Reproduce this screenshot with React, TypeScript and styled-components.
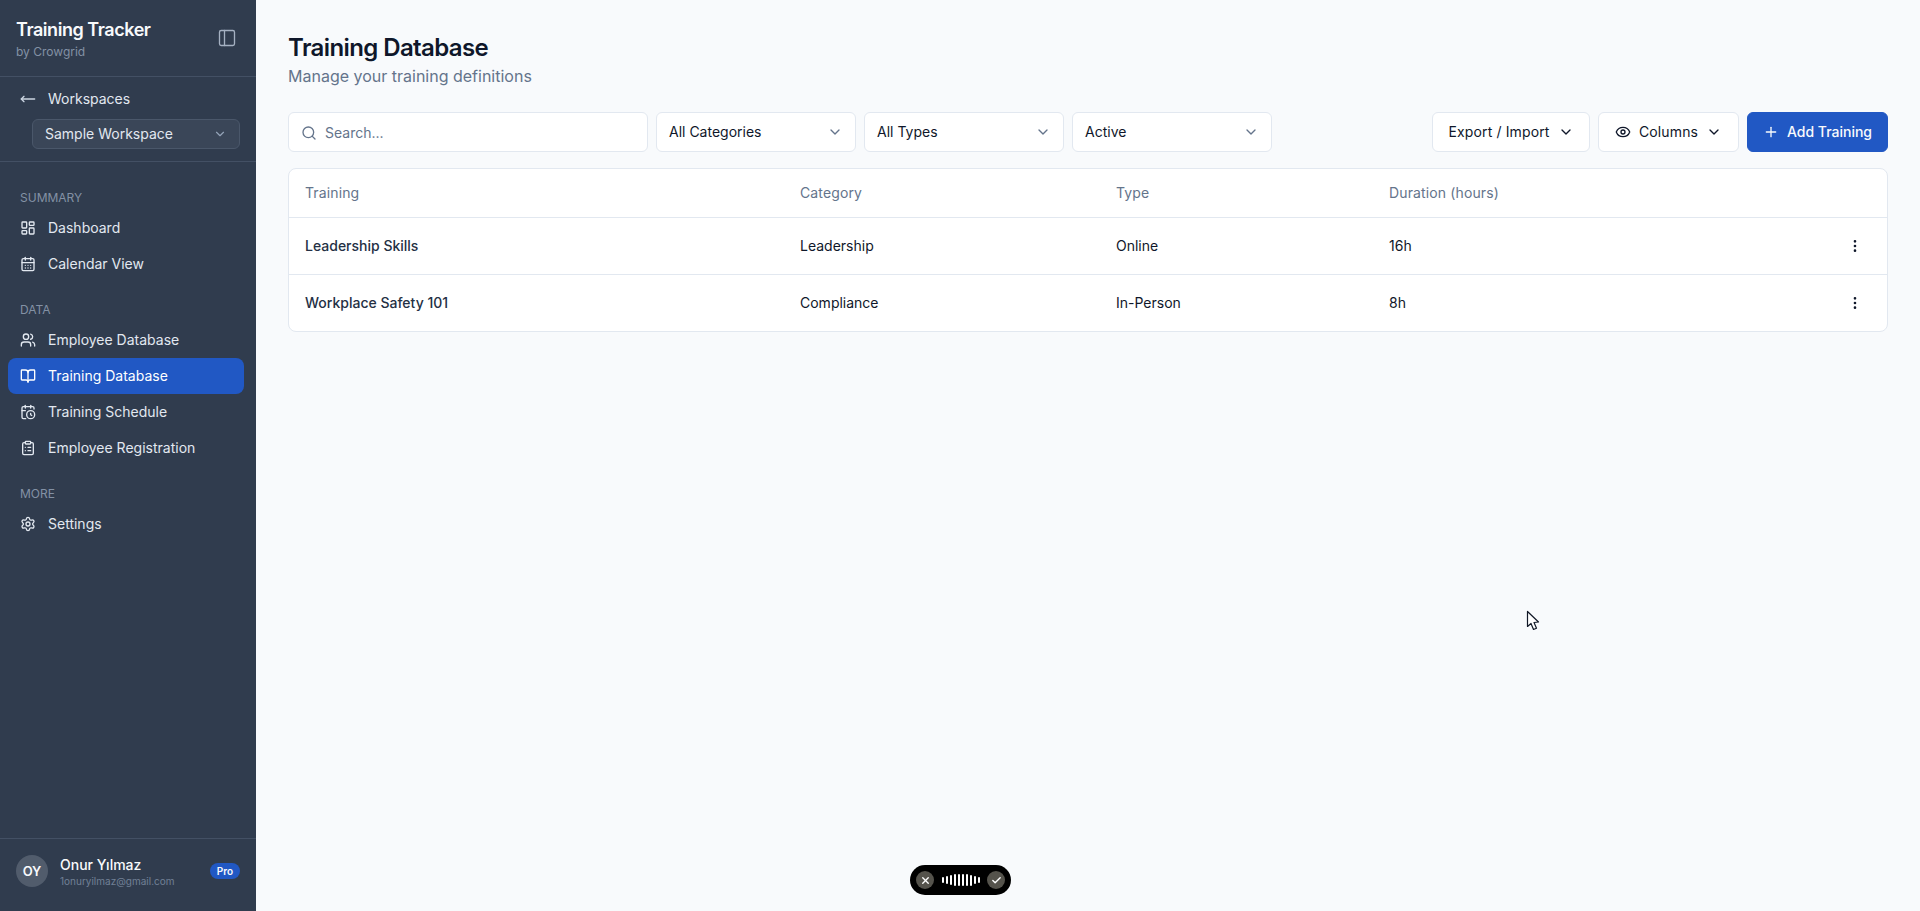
import * as React from 'react';
import styled, { createGlobalStyle } from 'styled-components';
import {
  BookOpen,
  CalendarClock,
  CalendarDays,
  Check,
  ChevronDown,
  ClipboardList,
  EllipsisVertical,
  Eye,
  LayoutDashboard,
  MoveLeft,
  PanelLeft,
  Plus,
  Search,
  Settings,
  Users,
  X,
} from 'lucide-react';

const GlobalStyle = createGlobalStyle`
  * { box-sizing: border-box; }
  html, body { margin: 0; height: 100%; }
  body {
    font-family: Inter, "Liberation Sans", sans-serif;
    background: #f8fafc;
    color: #0f172a;
  }
`;

const Shell = styled.div`
  display: flex;
  height: 911px;
  overflow: hidden;
`;

const Sidebar = styled.aside`
  width: 256px;
  flex: none;
  display: flex;
  flex-direction: column;
  background: #303c4e;
  color: #e2e8f0;
`;

const BrandRow = styled.div`
  height: 77px;
  display: flex;
  align-items: center;
  justify-content: space-between;
  padding: 0 19px 0 16px;
  border-bottom: 1px solid #435064;
`;

const BrandName = styled.div`
  font-size: 18px;
  line-height: 28px;
  font-weight: 600;
  letter-spacing: -0.45px;
  color: #f8fafc;
`;

const BrandSub = styled.div`
  font-size: 12px;
  line-height: 16px;
  color: #8391a5;
`;

const IconButton = styled.button`
  display: flex;
  padding: 0;
  border: 0;
  background: none;
  color: #a5b1c2;
`;

const WorkspaceBlock = styled.div`
  height: 85px;
  padding: 10px 16px 0 20px;
  border-bottom: 1px solid #435064;
`;

const BackLink = styled.div`
  height: 24px;
  display: flex;
  align-items: center;
  gap: 12px;
  padding-bottom: 1px;
  font-size: 14px;
  color: #e2e8f0;
  svg { color: #cbd5e1; }
`;

const WorkspaceSelect = styled.div`
  height: 30px;
  margin: 8px 0 0 12px;
  padding: 0 12px 1px;
  display: flex;
  align-items: center;
  justify-content: space-between;
  border: 1px solid #4a576a;
  border-radius: 6px;
  background: #3a4658;
  font-size: 14px;
  color: #e2e8f0;
  svg { color: #94a3b8; }
`;

const Nav = styled.nav`
  flex: 1;
  padding: 28px 12px 0 8px;
`;

const SectionLabel = styled.div<{ $first?: boolean }>`
  height: 16px;
  margin: ${(p) => (p.$first ? '0' : '20px')} 0 0 12px;
  font-size: 12px;
  line-height: 16px;
  color: #8391a5;
`;

const NavList = styled.div`
  margin-top: 4px;
  display: flex;
  flex-direction: column;
`;

const NavItem = styled.a<{ $active?: boolean }>`
  height: 36px;
  display: flex;
  align-items: center;
  gap: 12px;
  padding: 0 12px 1px;
  border-radius: 8px;
  font-size: 14px;
  background: ${(p) => (p.$active ? '#2158c4' : 'transparent')};
  color: ${(p) => (p.$active ? '#ffffff' : '#e2e8f0')};
`;

const Footer = styled.div`
  height: 73px;
  display: flex;
  align-items: center;
  gap: 12px;
  padding: 0 16px 8px;
  border-top: 1px solid #435064;
`;

const Avatar = styled.div`
  width: 32px;
  height: 32px;
  flex: none;
  display: flex;
  align-items: center;
  justify-content: center;
  border-radius: 50%;
  background: #515c6c;
  color: #f8fafc;
  font-size: 13px;
  font-weight: 600;
`;

const UserInfo = styled.div`
  flex: 1;
  min-width: 0;
  margin-top: 2px;
`;

const UserName = styled.div`
  font-size: 14px;
  line-height: 18px;
  font-weight: 500;
  color: #f8fafc;
`;

const UserMail = styled.div`
  font-size: 10px;
  line-height: 15px;
  color: #718096;
`;

const ProBadge = styled.span`
  padding: 0 7px;
  height: 16px;
  display: flex;
  align-items: center;
  border-radius: 8px;
  background: #2158c4;
  color: #f8fafc;
  font-size: 10px;
  font-weight: 600;
`;

const Main = styled.main`
  flex: 1;
  min-width: 0;
  padding: 32px;
`;

const Title = styled.h1`
  margin: 0;
  font-size: 24px;
  line-height: 32px;
  font-weight: 600;
  letter-spacing: -0.6px;
  color: #0f172a;
`;

const Subtitle = styled.p`
  margin: 0;
  font-size: 16px;
  line-height: 24px;
  color: #64748b;
`;

const Toolbar = styled.div`
  margin-top: 24px;
  display: flex;
  align-items: center;
  gap: 8px;
`;

const SearchBox = styled.div`
  width: 360px;
  height: 40px;
  display: flex;
  align-items: center;
  gap: 8px;
  padding: 1px 12px 0;
  background: #fff;
  border: 1px solid #e2e8f0;
  border-radius: 6px;
  font-size: 14px;
  color: #64748b;
  svg { color: #64748b; }
`;

const Dropdown = styled.div`
  width: 200px;
  height: 40px;
  display: flex;
  align-items: center;
  justify-content: space-between;
  padding: 0 12px 1px;
  background: #fff;
  border: 1px solid #e2e8f0;
  border-radius: 6px;
  font-size: 14px;
  color: #0f172a;
  svg { color: #64748b; }
`;

const Spacer = styled.div`
  flex: 1;
`;

const Button = styled.button<{ $primary?: boolean; $width: number }>`
  width: ${(p) => p.$width}px;
  height: 40px;
  display: flex;
  align-items: center;
  justify-content: center;
  gap: 8px;
  padding: 0 0 1px;
  border-radius: 6px;
  border: 1px solid ${(p) => (p.$primary ? '#2158c4' : '#e2e8f0')};
  background: ${(p) => (p.$primary ? '#2158c4' : '#fff')};
  color: ${(p) => (p.$primary ? '#f8fafc' : '#0f172a')};
  font: ${(p) => (p.$primary ? 500 : 400)} 14px Inter, "Liberation Sans", sans-serif;
  letter-spacing: ${(p) => (p.$primary ? '0' : '0.13px')};
`;

const Table = styled.div`
  margin-top: 16px;
  background: #fff;
  border: 1px solid #e2e8f0;
  border-radius: 8px;
`;

const Row = styled.div<{ $head?: boolean }>`
  height: ${(p) => (p.$head ? '48px' : '57px')};
  display: grid;
  grid-template-columns: 495px 316px 273px 1fr 64px;
  align-items: center;
  font-size: 14px;
  color: ${(p) => (p.$head ? '#64748b' : '#0f172a')};
  letter-spacing: ${(p) => (p.$head ? '0.13px' : '0')};
  & + & { border-top: 1px solid #e2e8f0; }
`;

const Cell = styled.div<{ $strong?: boolean }>`
  padding: 0 16px 1px;
  font-weight: ${(p) => (p.$strong ? 500 : 400)};
  color: ${(p) => (p.$strong ? '#243044' : 'inherit')};
`;

const RowAction = styled.div`
  display: flex;
  padding-left: 24px;
`;

const Recorder = styled.div`
  position: fixed;
  left: 910px;
  top: 865px;
  width: 101px;
  height: 30px;
  display: flex;
  align-items: center;
  justify-content: space-between;
  padding: 0 6px;
  border-radius: 15px;
  background: #000;
`;

const RecorderButton = styled.div`
  width: 18px;
  height: 18px;
  display: flex;
  align-items: center;
  justify-content: center;
  border-radius: 50%;
  background: #55534c;
  color: #fff;
`;

const Wave = styled.div`
  display: flex;
  align-items: center;
  gap: 2px;
`;

const WaveBar = styled.span<{ $h: number }>`
  width: 2px;
  height: ${(p) => p.$h}px;
  border-radius: 1px;
  background: #fff;
`;

const Cursor = styled.svg`
  position: fixed;
  left: 1526px;
  top: 610px;
`;

const waveHeights = [6, 8, 10, 12, 12, 12, 12, 11, 8, 6];

const sections = [
  {
    label: 'SUMMARY',
    items: [
      { name: 'Dashboard', icon: LayoutDashboard },
      { name: 'Calendar View', icon: CalendarDays },
    ],
  },
  {
    label: 'DATA',
    items: [
      { name: 'Employee Database', icon: Users },
      { name: 'Training Database', icon: BookOpen, active: true },
      { name: 'Training Schedule', icon: CalendarClock },
      { name: 'Employee Registration', icon: ClipboardList },
    ],
  },
  {
    label: 'MORE',
    items: [{ name: 'Settings', icon: Settings }],
  },
];

const trainings = [
  { name: 'Leadership Skills', category: 'Leadership', type: 'Online', hours: '16h' },
  { name: 'Workplace Safety 101', category: 'Compliance', type: 'In-Person', hours: '8h' },
];

export default function App() {
  return (
    <Shell>
      <GlobalStyle />
      <Sidebar>
        <BrandRow>
          <div>
            <BrandName>Training Tracker</BrandName>
            <BrandSub>by Crowgrid</BrandSub>
          </div>
          <IconButton>
            <PanelLeft size={20} strokeWidth={1.6} />
          </IconButton>
        </BrandRow>
        <WorkspaceBlock>
          <BackLink>
            <MoveLeft size={16} />
            Workspaces
          </BackLink>
          <WorkspaceSelect>
            Sample Workspace
            <ChevronDown size={14} />
          </WorkspaceSelect>
        </WorkspaceBlock>
        <Nav>
          {sections.map((section, i) => (
            <React.Fragment key={section.label}>
              <SectionLabel $first={i === 0}>{section.label}</SectionLabel>
              <NavList>
                {section.items.map((item) => (
                  <NavItem key={item.name} $active={item.active}>
                    <item.icon size={16} />
                    {item.name}
                  </NavItem>
                ))}
              </NavList>
            </React.Fragment>
          ))}
        </Nav>
        <Footer>
          <Avatar>OY</Avatar>
          <UserInfo>
            <UserName>Onur Yılmaz</UserName>
            <UserMail>1onuryilmaz@gmail.com</UserMail>
          </UserInfo>
          <ProBadge>Pro</ProBadge>
        </Footer>
      </Sidebar>
      <Main>
        <Title>Training Database</Title>
        <Subtitle>Manage your training definitions</Subtitle>
        <Toolbar>
          <SearchBox>
            <Search size={16} />
            Search...
          </SearchBox>
          <Dropdown>
            All Categories
            <ChevronDown size={16} />
          </Dropdown>
          <Dropdown>
            All Types
            <ChevronDown size={16} />
          </Dropdown>
          <Dropdown>
            Active
            <ChevronDown size={16} />
          </Dropdown>
          <Spacer />
          <Button $width={158}>
            Export / Import
            <ChevronDown size={16} />
          </Button>
          <Button $width={141}>
            <Eye size={16} />
            Columns
            <ChevronDown size={16} />
          </Button>
          <Button $width={141} $primary>
            <Plus size={16} />
            Add Training
          </Button>
        </Toolbar>
        <Table>
          <Row $head>
            <Cell>Training</Cell>
            <Cell>Category</Cell>
            <Cell>Type</Cell>
            <Cell>Duration (hours)</Cell>
            <div />
          </Row>
          {trainings.map((t) => (
            <Row key={t.name}>
              <Cell $strong>{t.name}</Cell>
              <Cell>{t.category}</Cell>
              <Cell>{t.type}</Cell>
              <Cell>{t.hours}</Cell>
              <RowAction>
                <EllipsisVertical size={16} />
              </RowAction>
            </Row>
          ))}
        </Table>
      </Main>
      <Recorder>
        <RecorderButton>
          <X size={11} strokeWidth={3} />
        </RecorderButton>
        <Wave>
          {waveHeights.map((h, i) => (
            <WaveBar key={i} $h={h} />
          ))}
        </Wave>
        <RecorderButton>
          <Check size={11} strokeWidth={3} />
        </RecorderButton>
      </Recorder>
      <Cursor width="14" height="22" viewBox="0 0 14 22">
        <path
          d="M1.5 1.5 L1.5 16.5 L5 13.5 L7.5 19.5 L10.5 18.2 L8 12.5 L12.5 12 Z"
          fill="#fff"
          stroke="#111827"
          strokeWidth="1.2"
          strokeLinejoin="round"
        />
      </Cursor>
    </Shell>
  );
}
